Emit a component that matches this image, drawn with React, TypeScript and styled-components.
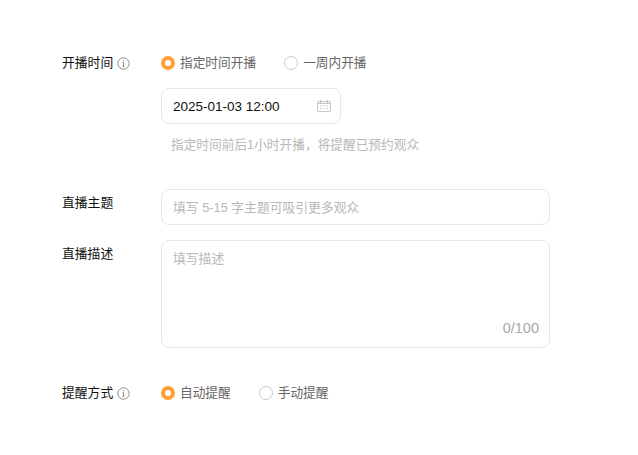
import React from "react";
import styled, { createGlobalStyle } from "styled-components";

const Global = createGlobalStyle`
  html, body { margin: 0; padding: 0; background: #fff; }
  body { font-family: "Liberation Sans", "Noto Sans CJK SC", sans-serif; }
  input::placeholder, textarea::placeholder { color: #b8b8b8; opacity: 1; }
`;

const Page = styled.div`
  width: 638px;
  height: 455px;
  box-sizing: border-box;
  padding: 53px 0 0 62px;
  overflow: hidden;
`;

const Row = styled.div<{ $gap?: number }>`
  display: grid;
  grid-template-columns: 99px 389px;
  margin-bottom: ${(p) => p.$gap ?? 0}px;
`;

const Label = styled.div<{ $top?: number }>`
  display: flex;
  align-items: center;
  gap: 4px;
  height: 20px;
  margin-top: ${(p) => p.$top ?? 0}px;
  font-size: 12.8px;
  line-height: 20px;
  color: #111;
`;

const InfoIcon = styled.svg`
  width: 13px;
  height: 13px;
  flex: none;
  margin-top: 1px;
`;

const RadioGroup = styled.div`
  display: flex;
  align-items: center;
  gap: 28px;
  height: 20px;
`;

const RadioItem = styled.label`
  display: flex;
  align-items: center;
  gap: 5px;
  font-size: 12.7px;
  line-height: 20px;
  color: #666;
`;

const RadioDot = styled.span<{ $on?: boolean }>`
  width: 14px;
  height: 14px;
  flex: none;
  box-sizing: border-box;
  border-radius: 50%;
  background: #fff;
  border: ${(p) => (p.$on ? "4px solid #ff9f37" : "1px solid #cbcbcb")};
`;

const Control = styled.div`
  min-width: 0;
`;

const DateBox = styled.div`
  display: flex;
  align-items: center;
  justify-content: space-between;
  box-sizing: border-box;
  width: 180px;
  height: 36px;
  margin-top: 15px;
  padding: 0 9px 0 11px;
  border: 1px solid #e6e6e6;
  border-radius: 8px;
  font-size: 13.5px;
  color: #111;
`;

const Hint = styled.div`
  margin: 11px 0 0 10px;
  font-size: 12.7px;
  line-height: 20px;
  color: #b8b8b8;
`;

const TextInput = styled.input`
  display: block;
  box-sizing: border-box;
  width: 389px;
  height: 36px;
  padding: 0 11px;
  border: 1px solid #e6e6e6;
  border-radius: 8px;
  outline: none;
  font: 12.8px "Liberation Sans", "Noto Sans CJK SC", sans-serif;
`;

const AreaWrap = styled.div`
  position: relative;
  height: 108px;
`;

const Area = styled.textarea`
  display: block;
  box-sizing: border-box;
  width: 389px;
  height: 108px;
  padding: 9px 11px;
  border: 1px solid #e6e6e6;
  border-radius: 8px;
  outline: none;
  resize: none;
  font: 12.8px/18px "Liberation Sans", "Noto Sans CJK SC", sans-serif;
`;

const Counter = styled.span`
  position: absolute;
  right: 11px;
  bottom: 11px;
  font-size: 14.5px;
  line-height: 18px;
  color: #a8a8a8;
`;

const Info = () => (
  <InfoIcon viewBox="0 0 13 13" fill="none" stroke="#8c8c8c">
    <circle cx="6.5" cy="6.5" r="5.7" />
    <path d="M6.5 5.6v4M5.6 5.6h.9M5.6 9.6h1.8" />
    <path d="M6.5 3.2v1" />
  </InfoIcon>
);

const Calendar = () => (
  <svg width="14" height="12" viewBox="0 0 14 12" fill="none" stroke="#c4c4c4">
    <rect x="0.5" y="1.5" width="13" height="10" rx="1" />
    <path d="M3.5 0v3M10.5 0v3M1 3.5h12" />
    <path d="M3 6h1.5M6.3 6h1.5M9.5 6h1.5M3 8.7h1.5M6.3 8.7h1.5M9.5 8.7h1.5" />
  </svg>
);

export default function App() {
  return (
    <Page>
      <Global />
      <Row $gap={34}>
        <Label>
          开播时间
          <Info />
        </Label>
        <Control>
          <RadioGroup>
            <RadioItem>
              <RadioDot $on />
              指定时间开播
            </RadioItem>
            <RadioItem>
              <RadioDot />
              一周内开播
            </RadioItem>
          </RadioGroup>
          <DateBox>
            2025-01-03 12:00
            <Calendar />
          </DateBox>
          <Hint>指定时间前后1小时开播，将提醒已预约观众</Hint>
        </Control>
      </Row>
      <Row $gap={15}>
        <Label $top={4}>直播主题</Label>
        <TextInput placeholder="填写 5-15 字主题可吸引更多观众" />
      </Row>
      <Row $gap={35}>
        <Label $top={4}>直播描述</Label>
        <AreaWrap>
          <Area placeholder="填写描述" />
          <Counter>0/100</Counter>
        </AreaWrap>
      </Row>
      <Row>
        <Label>
          提醒方式
          <Info />
        </Label>
        <RadioGroup>
          <RadioItem>
            <RadioDot $on />
            自动提醒
          </RadioItem>
          <RadioItem>
            <RadioDot />
            手动提醒
          </RadioItem>
        </RadioGroup>
      </Row>
    </Page>
  );
}
